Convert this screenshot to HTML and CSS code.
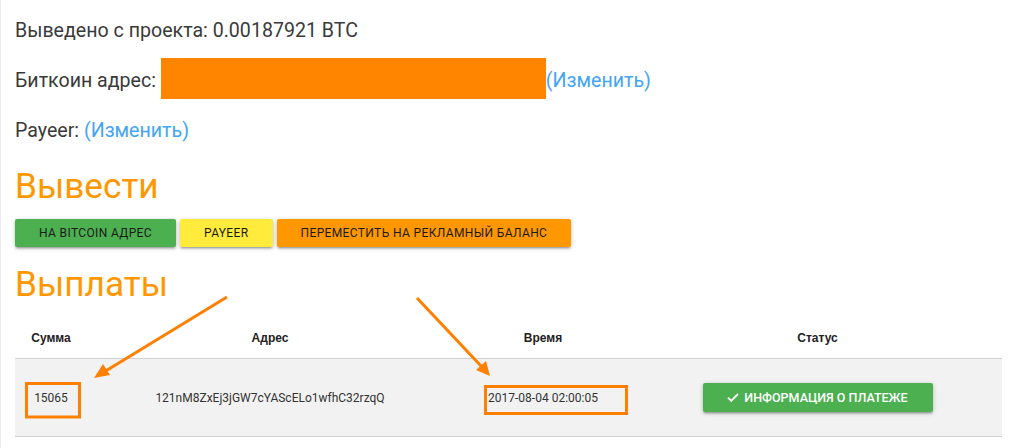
FILE: index.html
```html
<!DOCTYPE html>
<html lang="ru">
<head>
<meta charset="utf-8">
<title>Выплаты</title>
<link rel="stylesheet" href="styles.css">
</head>
<body>
<div class="page">
  <p class="line">Выведено с проекта: 0.00187921 BTC</p>
  <p class="line">Биткоин адрес: <span class="redact"></span><a class="link" href="#">(Изменить)</a></p>
  <p class="line">Payeer: <a class="link" href="#">(Изменить)</a></p>

  <h4 class="title">Вывести</h4>
  <div class="btns">
    <button class="btn btn-green">На Bitcoin адрес</button>
    <button class="btn btn-yellow">Payeer</button>
    <button class="btn btn-orange">Переместить на рекламный баланс</button>
  </div>

  <h4 class="title title-2">Выплаты</h4>
  <table class="pays">
    <colgroup>
      <col class="c1"><col class="c2"><col class="c3"><col class="c4">
    </colgroup>
    <thead>
      <tr><th>Сумма</th><th>Адрес</th><th>Время</th><th>Статус</th></tr>
    </thead>
    <tbody>
      <tr>
        <td>15065</td>
        <td>121nM8ZxEj3jGW7cYAScELo1wfhC32rzqQ</td>
        <td>2017-08-04 02:00:05</td>
        <td><button class="info-btn"><svg class="check" viewBox="0 0 12 9" width="12" height="9"><path d="M1 4.6 L4.2 7.8 L11 1" fill="none" stroke="#fff" stroke-width="1.8"/></svg>Информация о платеже</button></td>
      </tr>
    </tbody>
  </table>

  <svg class="annot" width="1011" height="448" viewBox="0 0 1011 448">
    <rect x="26.5" y="383.5" width="53" height="33.5" fill="none" stroke="#ff8000" stroke-width="3"/>
    <rect x="485.5" y="386.5" width="141" height="27" fill="none" stroke="#ff8000" stroke-width="3"/>
    <line x1="227" y1="297" x2="104" y2="372" stroke="#ff8000" stroke-width="3"/>
    <polygon points="94,378 103,364 110,375" fill="#ff8000"/>
    <line x1="417" y1="298" x2="482" y2="367" stroke="#ff8000" stroke-width="3"/>
    <polygon points="490,376 476,370 486,361" fill="#ff8000"/>
  </svg>
</div>
</body>
</html>
```

FILE: styles.css
```css
html, body {
  margin: 0;
  padding: 0;
  background: #fff;
}

body {
  font-family: Roboto, "Noto Sans", sans-serif;
  color: #3a3a3a;
}

.page {
  position: relative;
  box-sizing: border-box;
  height: 448px;
  padding: 16px 9px 0 14px;
  border-left: 1px solid #ececec;
  overflow: hidden;
}

.line {
  margin: 0 0 20px 0;
  font-size: 19.6px;
  line-height: 30px;
}

.redact {
  display: inline-block;
  width: 385px;
  height: 41px;
  background: #ff8400;
  vertical-align: middle;
  margin: -9px 0 -3px 0;
}

.link {
  color: #42a5f5;
  text-decoration: none;
}

.title {
  margin: 0 0 13px 0;
  font-size: 35.2px;
  line-height: 40px;
  font-weight: 400;
  color: #ff9800;
}

.title-2 {
  margin-top: 17px;
  margin-bottom: 13px;
}

.btns {
  display: flex;
  gap: 4px;
}

.btn {
  height: 28px;
  line-height: 28px;
  padding: 0 24px;
  border: none;
  border-radius: 2px;
  font-family: Roboto, sans-serif;
  font-size: 12px;
  letter-spacing: 0.37px;
  text-transform: uppercase;
  color: #1b1b1b;
  box-shadow: 0 2px 2px 0 rgba(0,0,0,.14), 0 3px 1px -2px rgba(0,0,0,.12), 0 1px 5px 0 rgba(0,0,0,.2);
}

.btn-green { background: #4caf50; }
.btn-yellow { background: #ffeb3b; }
.btn-orange { background: #ff9800; }

.pays {
  width: 987px;
  border-collapse: collapse;
  table-layout: fixed;
}

.c1 { width: 72px; }
.c2 { width: 366px; }
.c3 { width: 180px; }
.c4 { width: 369px; }

.pays th {
  height: 41px;
  padding: 0;
  font-family: "Liberation Sans", Arial, sans-serif;
  font-size: 12px;
  font-weight: 700;
  color: #222;
  text-align: center;
  border-bottom: 1px solid #d0d0d0;
}

.pays td {
  height: 77px;
  padding: 0;
  font-size: 12px;
  color: #333;
  text-align: center;
  background: #f2f2f2;
  border-bottom: 1px solid #d0d0d0;
}

.info-btn {
  display: inline-flex;
  align-items: center;
  justify-content: center;
  gap: 5px;
  width: 230px;
  height: 29px;
  border: none;
  border-radius: 2px;
  background: #4caf50;
  color: #fff;
  font-family: Roboto, sans-serif;
  font-size: 12.5px;
  font-weight: 500;
  text-transform: uppercase;
  box-shadow: 0 2px 2px 0 rgba(0,0,0,.14), 0 3px 1px -2px rgba(0,0,0,.12), 0 1px 5px 0 rgba(0,0,0,.2);
}

.check {
  display: block;
}

.annot {
  position: absolute;
  left: -1px;
  top: 0;
  pointer-events: none;
}
```
